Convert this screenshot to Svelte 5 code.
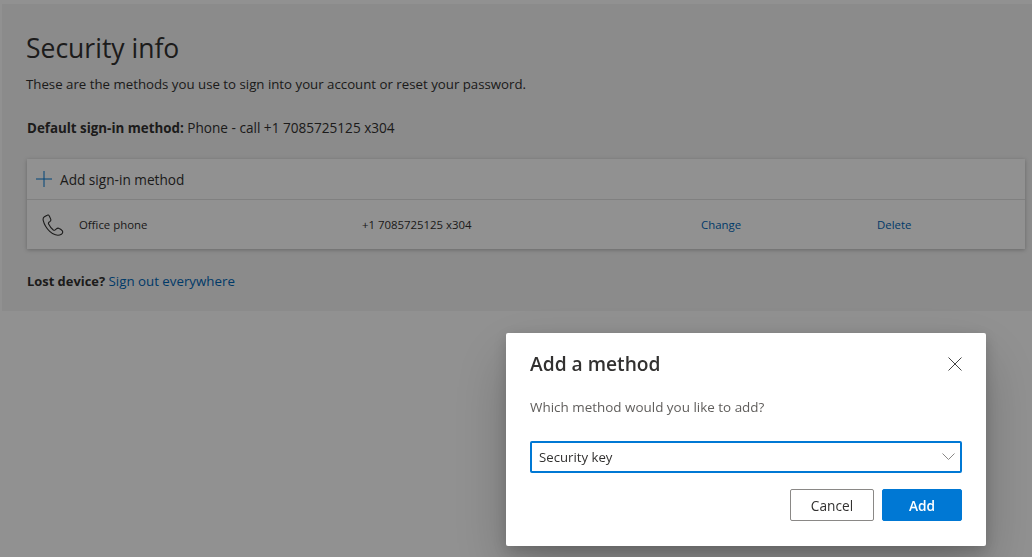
<script lang="ts">
	let method = $state('Security key');
</script>

<div class="page">
	<main class="panel">
		<h1>Security info</h1>
		<p class="intro">These are the methods you use to sign into your account or reset your password.</p>
		<p class="default"><b>Default sign-in method:</b> Phone - call +1 7085725125 x304</p>

		<section class="card">
			<div class="add-row">
				<svg class="plus" width="16" height="16" viewBox="0 0 16 16" aria-hidden="true">
					<path d="M0 8h16M8 0v16" fill="none" stroke="#0078d4" stroke-width="1" />
				</svg>
				<span>Add sign-in method</span>
			</div>
			<div class="method-row">
				<svg class="phone" width="22" height="22" viewBox="0 0 22 22" aria-hidden="true">
					<path
						d="M5.2 1.2 2.4 2.8C1.2 3.6.9 4.900 1.200 6.300c1 4.200 3.400 8 6.500 11 1.600 1.500 3.500 2.900 5.700 3.500 2 .6 4.200.5 6-.6 1.300-.8 1.700-2.300.8-3.500-.7-1-1.900-1.800-3-2.300-1-.5-2-.3-2.800.4l-1.200 1.100c-.6.5-1.300.5-1.900.1-2-1.500-3.600-3.700-4.700-5.900-.3-.7-.2-1.400.4-1.900l1.100-.8c.7-.6.9-1.500.6-2.300L7.300 2C6.900 1 6 .7 5.200 1.200Z"
						fill="none"
						stroke="#323130"
						stroke-width="1.100"
					/>
				</svg>
				<span class="name">Office phone</span>
				<span class="number">+1 7085725125 x304</span>
				<a class="change" href="#change">Change</a>
				<a class="delete" href="#delete">Delete</a>
			</div>
		</section>

		<p class="lost"><b>Lost device?</b> <a href="#signout">Sign out everywhere</a></p>
	</main>

	<div class="overlay">
		<div class="dialog">
			<div class="dialog-head">
				<h2>Add a method</h2>
				<svg class="close" width="14" height="14" viewBox="0 0 14 14" aria-hidden="true">
					<path d="M.5.5l13 13M13.500.5l-13 13" fill="none" stroke="#444" stroke-width="1" />
				</svg>
			</div>
			<p class="question">Which method would you like to add?</p>
			<div class="select">
				<span>{method}</span>
				<svg width="13" height="8" viewBox="0 0 13 8" aria-hidden="true">
					<path d="M.5.5l6 6 6-6" fill="none" stroke="#8a8886" stroke-width="1" />
				</svg>
			</div>
			<div class="actions">
				<button class="btn cancel" type="button">Cancel</button>
				<button class="btn add" type="button">Add</button>
			</div>
		</div>
	</div>
</div>

<style>
	:global(body) {
		margin: 0;
		background: #fff;
	}
	.page {
		height: 557px;
		overflow: hidden;
		font-family: 'Open Sans', 'Noto Sans', sans-serif;
		color: #323130;
		padding: 4px 0 0 2px;
		box-sizing: border-box;
	}
	.panel {
		background: #f4f4f4;
		height: 307px;
		box-sizing: border-box;
		padding: 25px 7px 0 25px;
	}
	h1 {
		margin: 0 0 0 -1px;
		font-size: 26.500px;
		line-height: 38px;
		font-weight: 400;
	}
	.intro {
		margin: 7px 0 0 -1px;
		font-size: 13.250px;
		line-height: 20px;
	}
	.default {
		margin: 24px 0 0;
		font-size: 13.600px;
		line-height: 20px;
	}
	.default b {
		font-size: 13.350px;
	}
	.card {
		margin-top: 21px;
		background: #fff;
		box-shadow: 0 1px 4px rgba(0, 0, 0, 0.25);
	}
	.add-row {
		display: flex;
		align-items: center;
		gap: 8px;
		height: 40px;
		padding-left: 9px;
		font-size: 13.650px;
		border-bottom: 1px solid #e1e1e1;
	}
	.method-row {
		display: grid;
		grid-template-columns: 52px 283px 339px 176px 1fr;
		align-items: center;
		height: 49px;
		font-size: 11.400px;
	}
	.phone {
		margin-left: 15px;
	}
	a {
		color: #0067b8;
		text-decoration: none;
	}
	.lost {
		margin: 22px 0 0;
		font-size: 13.300px;
		line-height: 20px;
	}
	.lost b {
		font-size: 12.900px;
	}
	.overlay {
		position: fixed;
		inset: 0;
		background: rgba(0, 0, 0, 0.43);
		display: flex;
		justify-content: flex-end;
		align-items: flex-end;
		padding: 0 46px 11px 0;
		box-sizing: border-box;
	}
	.dialog {
		width: 480px;
		height: 213px;
		box-sizing: border-box;
		padding: 17px 24px 0;
		background: #fff;
		border-radius: 2px;
		box-shadow:
			0 25.600px 57.600px rgba(0, 0, 0, 0.22),
			0 4.800px 14.400px rgba(0, 0, 0, 0.18);
	}
	.dialog-head {
		display: flex;
		justify-content: space-between;
		align-items: center;
		height: 26px;
	}
	h2 {
		margin: 0;
		font-size: 19.200px;
		font-weight: 600;
		color: #323130;
	}
	.close {
		margin-top: 1px;
	}
	.question {
		margin: 21px 0 0;
		font-size: 13.450px;
		line-height: 20px;
		color: #605e5c;
	}
	.select {
		margin-top: 24px;
		height: 32px;
		box-sizing: border-box;
		border: 2px solid #0078d4;
		border-radius: 2px;
		display: flex;
		align-items: center;
		justify-content: space-between;
		padding: 0 5px 0 7px;
		font-size: 13.200px;
	}
	.actions {
		display: flex;
		justify-content: flex-end;
		gap: 8px;
		margin-top: 16px;
	}
	.btn {
		height: 32px;
		width: 80px;
		border-radius: 2px;
		font-family: inherit;
		font-size: 13.700px;
		padding: 0;
	}
	.cancel {
		width: 84px;
		background: #fff;
		border: 1px solid #8a8886;
		color: #323130;
		font-weight: 400;
	}
	.add {
		background: #0078d4;
		border: 1px solid #0078d4;
		color: #fff;
		font-weight: 600;
	}
</style>
